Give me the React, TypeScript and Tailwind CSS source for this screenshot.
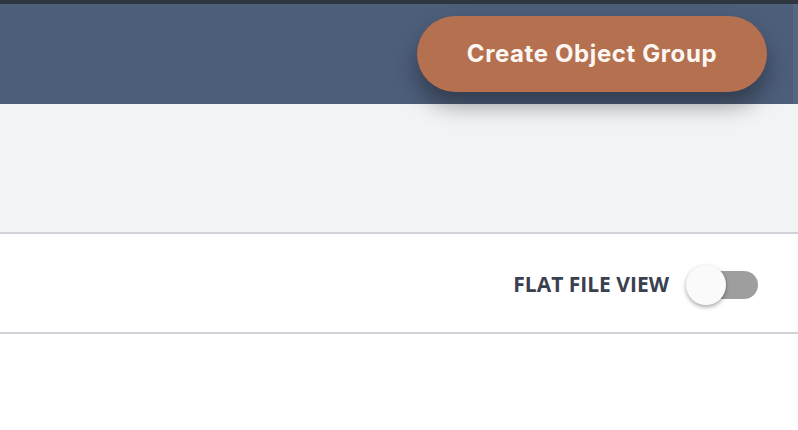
const Toggle = () => {
    return (
        <div className="relative w-[72px] h-[40px] flex items-center">
            <div className="ml-[4px] w-[68px] h-[28px] rounded-full bg-[#9e9e9e]"></div>
            <div className="absolute left-0 top-0 w-[40px] h-[40px] rounded-full bg-[#fafafa] shadow-[0_2px_4px_rgba(0,0,0,0.35)]"></div>
        </div>
    )
}

const App = () => {
    return (
        <div className="w-[798px] h-[430px] bg-white overflow-hidden">
            <div className="h-[4px] bg-[#2e3740]"></div>
            <div className="h-[100px] bg-[#4d5e7a] flex items-center justify-end pr-[31px] relative">
                <button className="relative z-10 w-[350px] h-[76px] rounded-full bg-[#b5704f] text-[#fdf7f4] text-[24px] font-bold tracking-[0.6px] font-['Inter',sans-serif] shadow-[0_14px_22px_rgba(0,0,0,0.35)]">
                    Create Object Group
                </button>
                <div className="absolute right-0 top-0 h-full w-[5px] bg-[#56667f]"></div>
            </div>
            <div className="h-[130px] bg-[#f2f3f5] border-b-2 border-[#d1d3d8]"></div>
            <div className="h-[100px] border-b-2 border-[#d1d3d8] flex items-center justify-end pr-[40px] pt-[4px]">
                <span className="mr-[17px] text-[21px] font-bold text-[#3a4050] font-['Open_Sans',sans-serif]">
                    FLAT FILE VIEW
                </span>
                <Toggle />
            </div>
        </div>
    )
}

export default App
